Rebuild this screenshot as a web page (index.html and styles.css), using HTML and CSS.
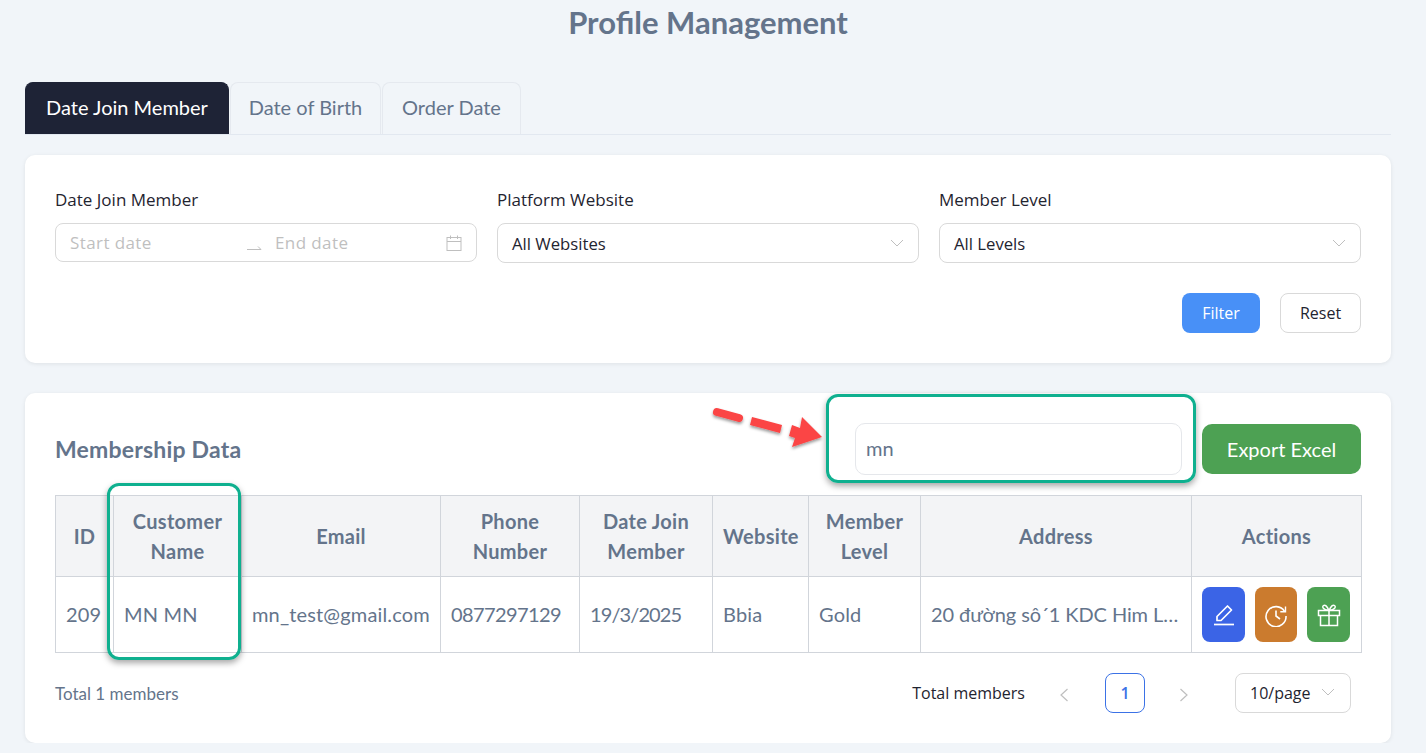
FILE: index.html

```html
<!DOCTYPE html>
<html lang="en">
<head>
  <meta charset="UTF-8" />
  <meta name="viewport" content="width=device-width, initial-scale=1" />
  <title>Profile Management</title>
  <link rel="stylesheet" href="styles.css">
</head>
<body>
  <div class="page">
    <h1 class="page-title">Profile Management</h1>

    <div class="tabs">
      <button class="tab tab-active">Date Join Member</button>
      <button class="tab tab-birth">Date of Birth</button>
      <button class="tab tab-order">Order Date</button>
    </div>

    <section class="card filter-card">
      <div class="filter-grid">
        <div class="field">
          <label class="field-label">Date Join Member</label>
          <div class="control control-date">
            <span class="date-part date-start">Start date</span>
            <svg class="date-sep" width="16" height="8" viewBox="0 0 16 8"><path d="M1 6.5h14M15 6.5l-3-3" fill="none" stroke="#bfbfbf" stroke-width="1"/></svg>
            <span class="date-part date-end">End date</span>
            <svg class="calendar" width="16" height="16" viewBox="0 0 16 16" fill="none" stroke="#bfbfbf" stroke-width="1"><rect x="1" y="2.5" width="14" height="13"/><path d="M1 6.5h14M4.5 .5v3.5M11.5 .5v3.5"/></svg>
          </div>
        </div>
        <div class="field">
          <label class="field-label">Platform Website</label>
          <div class="control control-select">
            <span>All Websites</span>
            <svg class="chevron" width="14" height="8" viewBox="0 0 14 8"><path d="M1 1l6 6 6-6" fill="none" stroke="#bfbfbf" stroke-width="1"/></svg>
          </div>
        </div>
        <div class="field">
          <label class="field-label">Member Level</label>
          <div class="control control-select">
            <span>All Levels</span>
            <svg class="chevron" width="14" height="8" viewBox="0 0 14 8"><path d="M1 1l6 6 6-6" fill="none" stroke="#bfbfbf" stroke-width="1"/></svg>
          </div>
        </div>
      </div>
      <div class="filter-actions">
        <button class="btn btn-primary">Filter</button>
        <button class="btn btn-default">Reset</button>
      </div>
    </section>

    <section class="card data-card">
      <div class="data-head">
        <h2 class="data-title">Membership Data</h2>
        <div class="data-tools">
          <input class="search" type="text" value="mn" />
          <button class="btn-export">Export Excel</button>
        </div>
      </div>

      <table class="members">
        <colgroup>
          <col class="c-id"><col class="c-name"><col class="c-email"><col class="c-phone"><col class="c-date"><col class="c-site"><col class="c-level"><col class="c-addr"><col class="c-act">
        </colgroup>
        <thead>
          <tr>
            <th>ID</th>
            <th>Customer Name</th>
            <th>Email</th>
            <th>Phone Number</th>
            <th>Date Join Member</th>
            <th>Website</th>
            <th>Member Level</th>
            <th>Address</th>
            <th>Actions</th>
          </tr>
        </thead>
        <tbody>
          <tr>
            <td>209</td>
            <td>MN MN</td>
            <td>mn_test@gmail.com</td>
            <td class="cell-phone">0877297129</td>
            <td class="cell-date">19/3/2025</td>
            <td>Bbia</td>
            <td>Gold</td>
            <td class="cell-addr">20 đường sô´1 KDC Him Lam Quận 7</td>
            <td class="cell-actions">
              <div class="actions">
                <button class="act act-edit">
                  <svg width="24" height="24" viewBox="0 0 24 24" fill="none" stroke="#fff" stroke-width="1.7"><path d="M2 21.5h20"/><path d="M5 17.5v-4L15.500 3l4 4L9 17.500z" stroke-linejoin="round"/></svg>
                </button>
                <button class="act act-history">
                  <svg width="24" height="24" viewBox="0 0 24 24" fill="none" stroke="#fff" stroke-width="1.6"><path d="M20.600 8.500A10 10 0 1 0 22 13"/><path d="M21.500 3.500v5.200h-5.200" stroke-width="1.400"/><path d="M12 7.500V13l4 3"/></svg>
                </button>
                <button class="act act-gift">
                  <svg width="24" height="24" viewBox="0 0 24 24" fill="none" stroke="#fff" stroke-width="1.5"><rect x="1.500" y="7.500" width="21" height="5"/><path d="M3.500 12.500v10h17v-10M12 7.500v15"/><path d="M12 7.500C10 3 8 1.500 6.500 2.500S5.500 7 12 7.500zM12 7.500C14 3 16 1.500 17.500 2.500S18.500 7 12 7.500z"/></svg>
                </button>
              </div>
            </td>
          </tr>
        </tbody>
      </table>

      <div class="table-foot">
        <span class="total-left">Total 1 members</span>
        <div class="pager">
          <span class="pager-total">Total members</span>
          <svg class="pager-arrow" width="10" height="14" viewBox="0 0 10 14"><path d="M8.500 1L2 7l6.500 6" fill="none" stroke="#bfbfbf" stroke-width="1.200"/></svg>
          <span class="pager-num">1</span>
          <svg class="pager-arrow" width="10" height="14" viewBox="0 0 10 14"><path d="M1.500 1L8 7l-6.500 6" fill="none" stroke="#bfbfbf" stroke-width="1.200"/></svg>
          <div class="pager-size">
            <span>10/page</span>
            <svg class="size-chevron" width="14" height="8" viewBox="0 0 14 8"><path d="M1 1l6 6 6-6" fill="none" stroke="#bfbfbf" stroke-width="1"/></svg>
          </div>
        </div>
      </div>
    </section>
  </div>

  <!-- markup drawn over the screenshot -->
  <div class="mark mark-search"></div>
  <div class="mark mark-name"></div>
  <svg class="mark-arrow" width="120" height="50" viewBox="0 0 120 50">
    <defs>
      <filter id="arrowShadow" x="-20%" y="-30%" width="140%" height="170%"><feDropShadow dx="0" dy="2" stdDeviation="1.500" flood-color="#000" flood-opacity=".4"/></filter>
    </defs>
    <g filter="url(#arrowShadow)">
      <path d="M7 9L29 15" stroke="#fb4444" stroke-width="8" stroke-linecap="round" fill="none"/>
      <path d="M42 14L72 22L70 30L40 22z" fill="#fb4444"/>
      <path d="M92 14L112 34L82 44L85 35L79 33L82 22L90 25z" fill="#fb4444"/>
    </g>
  </svg>
</body>
</html>
```

FILE: styles.css

```css
* {
  box-sizing: border-box;
}
body {
  margin: 0;
  background-color: #f1f5f9;
  font-family: 'Lato', 'Noto Sans', sans-serif;
  color: #64748b;
  overflow: hidden;
}
.page {
  padding: 0 35px 0 25px;
}
.page-title {
  margin: 0;
  padding-top: 4px;
  height: 82px;
  text-align: center;
  font-size: 31px;
  font-weight: 700;
  line-height: 36px;
  color: #64748b;
}

/* tabs */
.tabs {
  display: flex;
  height: 53px;
  gap: 1px;
  border-bottom: 1px solid #e2e8f0;
  margin-bottom: 20px;
}
.tab {
  height: 52px;
  padding: 0 0 4px;
  font-family: inherit;
  font-size: 20px;
  color: #64748b;
  background: #f1f5f9;
  border: 1px solid #e5e9ef;
  border-bottom: none;
  border-radius: 8px 8px 0 0;
}
.tab-active {
  width: 204px;
  background: #1e2336;
  border-color: #1e2336;
  color: #fff;
}
.tab-birth {
  width: 151px;
}
.tab-order {
  width: 139px;
}

/* cards */
.card {
  background: #fff;
  border-radius: 10px;
  box-shadow: 0 1px 4px rgba(0, 0, 0, 0.08);
  padding: 30px;
}
.filter-card {
  height: 208px;
  margin-bottom: 30px;
}
.filter-grid {
  display: grid;
  grid-template-columns: repeat(3, 1fr);
  gap: 20px;
}
.field-label {
  display: block;
  height: 38px;
  padding-top: 3px;
  font-family: 'Open Sans', sans-serif;
  font-size: 17px;
  line-height: 24px;
  color: #1f2430;
}
.control {
  display: flex;
  align-items: center;
  height: 40px;
  padding: 0 14px;
  border: 1px solid #d9d9d9;
  border-radius: 8px;
  font-family: 'Open Sans', sans-serif;
  font-size: 16.7px;
  color: #1f2430;
}
.control-date {
  height: 39px;
}
.date-part {
  color: #bfbfbf;
  font-size: 17px;
  letter-spacing: 0.4px;
}
.date-start {
  width: 176px;
}
.date-end {
  margin-left: 13px;
  flex: 1;
}
.date-sep {
  margin-top: 8px;
}
.control-select {
  justify-content: space-between;
}
.filter-actions {
  display: flex;
  justify-content: flex-end;
  gap: 20px;
  margin-top: 30px;
}
.btn {
  height: 40px;
  padding: 0;
  border-radius: 8px;
  font-family: 'Open Sans', sans-serif;
  font-size: 16px;
}
.btn-primary {
  width: 78px;
  background: #4890f7;
  border: none;
  color: #fff;
}
.btn-default {
  width: 81px;
  background: #fff;
  border: 1px solid #d9d9d9;
  color: #1f2430;
}

/* data card */
.data-card {
  height: 350px;
}
.data-head {
  display: flex;
  justify-content: space-between;
  align-items: center;
  height: 52px;
  margin-bottom: 20px;
}
.data-title {
  margin: 0;
  font-size: 23px;
  letter-spacing: 0.2px;
  font-weight: 700;
  color: #64748b;
}
.data-tools {
  display: flex;
  align-items: center;
  gap: 20px;
}
.search {
  width: 327px;
  height: 52px;
  padding: 0 10px 2px;
  border: 1px solid #e5e7eb;
  border-radius: 10px;
  font-family: inherit;
  font-size: 20px;
  color: #64748b;
  outline: none;
}
.btn-export {
  width: 159px;
  height: 50px;
  background: #4da153;
  border: none;
  border-radius: 10px;
  color: #fff;
  font-family: inherit;
  font-size: 20px;
}

/* table */
.members {
  width: 1306px;
  table-layout: fixed;
  border-collapse: collapse;
  font-size: 20px;
}
.c-id { width: 58px; }
.c-name { width: 128px; }
.c-email { width: 199px; }
.c-phone { width: 139px; }
.c-date { width: 133px; }
.c-site { width: 96px; }
.c-level { width: 112px; }
.c-addr { width: 271px; }
.c-act { width: 170px; }
.members th,
.members td {
  border: 1px solid #d1d5db;
  padding: 0 10px;
}
.members th {
  height: 81px;
  background: #f3f4f6;
  font-weight: 700;
  letter-spacing: 0.3px;
  line-height: 30px;
  text-align: center;
}
.members td {
  height: 76px;
  padding-bottom: 2px;
  letter-spacing: 0.15px;
  white-space: nowrap;
  overflow: hidden;
  text-overflow: ellipsis;
}
.members .cell-phone {
  letter-spacing: -0.6px;
}
.members .cell-date {
  letter-spacing: -0.9px;
}
.members .cell-addr {
  letter-spacing: -0.1px;
}
.members .cell-actions {
  padding-bottom: 0;
}
.actions {
  display: flex;
  justify-content: space-between;
  width: 148px;
}
.act {
  display: flex;
  align-items: center;
  justify-content: center;
  width: 43px;
  height: 55px;
  padding: 0;
  border: none;
  border-radius: 8px;
}
.act-edit { background: #3b64e6; }
.act-history { background: #cb7b2e; width: 42px; }
.act-gift { background: #4da153; }

/* footer of the table */
.table-foot {
  display: flex;
  justify-content: space-between;
  align-items: center;
  height: 40px;
  margin-top: 20px;
}
.total-left {
  font-size: 17px;
}
.pager {
  display: flex;
  align-items: center;
  font-family: 'Open Sans', sans-serif;
  font-size: 16px;
  color: #1f2430;
  padding-right: 10px;
}
.pager-total {
  margin-right: 34px;
}
.pager-arrow {
  margin-top: 4px;
}
.pager-num {
  display: flex;
  align-items: center;
  justify-content: center;
  width: 40px;
  height: 40px;
  margin: 0 34px 0 36px;
  border: 1px solid #3b72e6;
  border-radius: 8px;
  color: #3b72e6;
  font-weight: 600;
}
.pager-size {
  display: flex;
  align-items: center;
  gap: 10px;
  width: 116px;
  height: 40px;
  margin-left: 46px;
  padding-left: 14px;
  border: 1px solid #d9d9d9;
  border-radius: 8px;
}
.size-chevron {
  margin-bottom: 3px;
}

/* green boxes and the red arrow */
.mark {
  position: absolute;
  border: 3px solid #0fb08f;
  border-radius: 12px;
  box-shadow: 0 3px 6px rgba(0, 0, 0, 0.35);
}
.mark-search {
  left: 826px;
  top: 394px;
  width: 370px;
  height: 89px;
}
.mark-name {
  left: 107px;
  top: 483px;
  width: 134px;
  height: 177px;
}
.mark-arrow {
  position: absolute;
  left: 710px;
  top: 403px;
}
```
